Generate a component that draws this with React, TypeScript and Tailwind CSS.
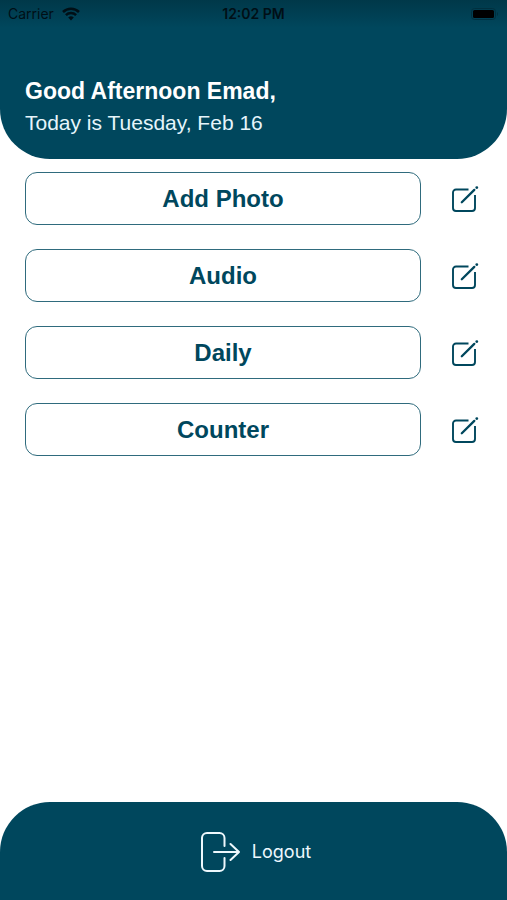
const actions = ["Add Photo", "Audio", "Daily", "Counter"];

const WifiIcon = () => (
  <svg width="18" height="14" viewBox="0 0 18 14" aria-hidden="true">
    <g fill="none" stroke="#000f16" strokeWidth="2.5">
      <path d="M1 5a11.4 11.4 0 0 1 16 0" />
      <path d="M3.900 8.200a7.300 7.300 0 0 1 10.200 0" />
    </g>
    <path d="M9 13.400 6.200 10.600a4 4 0 0 1 5.600 0z" fill="#000f16" />
  </svg>
);

const BatteryIcon = () => (
  <svg width="28" height="12" viewBox="0 0 28 12" aria-hidden="true">
    <rect x="0.5" y="0.5" width="24" height="11" rx="3" fill="none" stroke="#00303f" />
    <rect x="2" y="2" width="21" height="8" rx="1.5" fill="#000" />
    <path d="M26 4v4c1.300-.5 1.300-3.500 0-4z" fill="#00303f" />
  </svg>
);

const EditIcon = () => (
  <svg width="28" height="28" viewBox="0 0 28 28" fill="none" stroke="#00475d" aria-hidden="true">
    <path
      d="M17.500 4.500H5a3 3 0 0 0-3 3V23a3 3 0 0 0 3 3H21a3 3 0 0 0 3-3V10"
      strokeWidth="1.9"
    />
    <path d="M10.800 17.300 23.300 4.900" strokeWidth="2.300" strokeLinecap="round" />
    <path d="M25.700 2.600h.2" strokeWidth="2.600" strokeLinecap="round" />
  </svg>
);

const LogoutIcon = () => (
  <svg
    width="40"
    height="40"
    viewBox="0 0 40 40"
    fill="none"
    stroke="#eef8fd"
    strokeWidth="2"
    strokeLinecap="round"
    strokeLinejoin="round"
    aria-hidden="true"
  >
    <path d="M24.500 14V6a5 5 0 0 0-5-5H7a5 5 0 0 0-5 5v28a5 5 0 0 0 5 5h12.500a5 5 0 0 0 5-5v-8" />
    <path d="M14 20h25M30.500 12l8.500 8-8.500 8" />
  </svg>
);

const StatusBar = () => (
  <div className="grid h-7 grid-cols-3 items-center bg-linear-to-b from-[#003849] to-[#00475d] px-2 font-[Inter,sans-serif] text-sm text-[#000f16]">
    <div className="flex items-center gap-2">
      <span>Carrier</span>
      <WifiIcon />
    </div>
    <span className="text-center font-semibold">12:02 PM</span>
    <div className="flex justify-end">
      <BatteryIcon />
    </div>
  </div>
);

const App = () => {
  return (
    <div className="flex min-h-screen flex-col bg-white font-['Liberation_Sans',Arial,sans-serif]">
      <header className="overflow-hidden rounded-b-[50px] bg-[#00475d] text-white">
        <StatusBar />
        <div className="px-[25px] pt-[47px] pb-5">
          <h1 className="text-[23px] leading-8 font-bold">Good Afternoon Emad,</h1>
          <p className="text-[21px] leading-8 text-[#e6f5fb]">Today is Tuesday, Feb 16</p>
        </div>
      </header>

      <main className="flex-1 pt-[13px] pr-7 pl-[25px]">
        <ul className="flex flex-col gap-6">
          {actions.map((action) => (
            <li key={action} className="flex items-center gap-[30px]">
              <button
                type="button"
                className="h-[53px] flex-1 rounded-xl border border-[#2f6b7d] text-2xl font-bold text-[#00475d]"
              >
                {action}
              </button>
              <button type="button" aria-label={`Edit ${action}`}>
                <EditIcon />
              </button>
            </li>
          ))}
        </ul>
      </main>

      <footer className="flex h-[98px] items-center justify-center rounded-t-[50px] bg-[#00475d] pt-0.5 pl-1">
        <button type="button" className="flex items-center gap-3 text-lg text-[#eef8fd]">
          <LogoutIcon />
          <span className="font-[Inter,sans-serif]">Logout</span>
        </button>
      </footer>
    </div>
  );
};

export default App;
